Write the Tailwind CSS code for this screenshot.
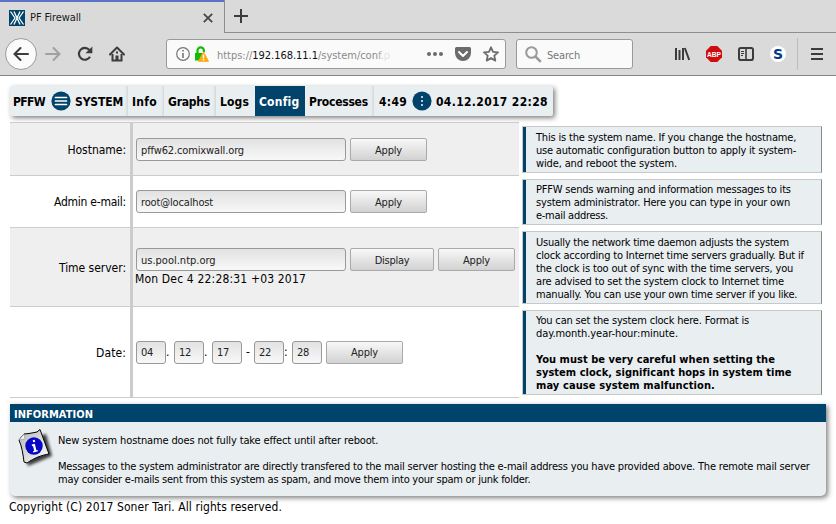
<!DOCTYPE html>
<html lang="en">
<head>
<meta charset="utf-8">
<title>PF Firewall</title>
<script src="https://cdn.jsdelivr.net/npm/@tailwindcss/browser@4"></script>
</head>
<body class="w-[836px] h-[524px] overflow-hidden bg-white text-black font-['DejaVu_Sans_Condensed','DejaVu_Sans',sans-serif] text-[11px] leading-[13px] whitespace-nowrap">

<!-- Browser chrome -->
<header class="h-[76px] bg-[#dadada] border-b border-[#858585]">
  <div class="flex h-[33px]">
    <div class="flex items-center w-[224px] h-[33px] border-t-2 border-[#5b71c4] pl-[9px] pr-[11px]">
      <svg class="w-4 h-4 shrink-0" viewBox="0 0 16 16"><rect width="16" height="16" fill="#00436b"/><g fill="none" stroke="#fff" stroke-width="1.300"><path d="M1.500 1.500l4.500 6.500-4.500 6.500M14.500 1.500L10 8l4.500 6.500M5 1.500l6 13M11 1.500L5 14.500"/></g></svg>
      <span class="ml-[5px] tracking-[-0.09px] text-[#1a1a1a]">PF Firewall</span>
      <svg class="ml-auto w-[10px] h-[10px]" viewBox="0 0 10 10"><path d="M.8.8l8.400 8.400M9.200.8L.8 9.200" stroke="#444" stroke-width="1.700"/></svg>
    </div>
    <div class="flex items-center flex-1 h-[33px] border-l border-b border-[#8e8e8e] pl-[9px]">
      <svg class="w-[14px] h-[14px]" viewBox="0 0 14 14"><path d="M7 0v14M0 7h14" stroke="#3c3c3c" stroke-width="2"/></svg>
    </div>
  </div>
  <div class="flex items-center h-[42px] pl-[5px]">
    <div class="w-8 h-8 rounded-full border border-[#9a9a9a] bg-[#fbfbfb] flex items-center justify-center">
      <svg class="w-4 h-4" viewBox="0 0 16 16" fill="none" stroke="#3c3c3c" stroke-width="2" stroke-linecap="round"><path d="M15 8H2M7.500 2L1.500 8l6 6"/></svg>
    </div>
    <svg class="ml-2 w-4 h-4" viewBox="0 0 16 16" fill="none" stroke="#a0a0a0" stroke-width="2" stroke-linecap="round"><path d="M1 8H14M8.500 2l6 6-6 6"/></svg>
    <svg class="ml-4 w-4 h-4" viewBox="0 0 16 16"><path d="M13 10.700A5.900 5.900 0 1 1 12.300 4" fill="none" stroke="#3c3c3c" stroke-width="2.200"/><path d="M15.300.5v6.800H8.500z" fill="#3c3c3c"/></svg>
    <svg class="ml-4 w-4 h-4" viewBox="0 0 16 16"><path d="M1 8.500l7-7 7 7" fill="none" stroke="#3c3c3c" stroke-width="2" stroke-linecap="round" stroke-linejoin="round"/><path d="M3.500 8v6.500h9V8" fill="none" stroke="#3c3c3c" stroke-width="2"/><path d="M6.500 9.500h3V15h-3z" fill="#3c3c3c"/><path d="M7 5.500h2v2H7z" fill="#3c3c3c"/></svg>
    <div class="ml-[41px] flex items-center w-[340px] h-[30px] rounded-[3px] border border-[#999] bg-[#fafafa] pl-[9px] pr-[6px]">
      <svg class="w-[14px] h-[14px]" viewBox="0 0 14 14"><circle cx="7" cy="7" r="6.300" fill="none" stroke="#757575" stroke-width="1.200"/><path d="M6.200 3h1.600v1.600H6.200zM6.200 6h1.600v5H6.200z" fill="#757575"/></svg>
      <svg class="ml-[4px] w-[15px] h-4" viewBox="0 0 15 16"><path d="M3.500 8V4.500a3.200 3.200 0 0 1 6.400 0V6" fill="none" stroke="#12bc00" stroke-width="2.200"/><path d="M1 7h9v7.500H1z" fill="#12bc00"/><path d="M9.500 6l5 9.300h-10z" fill="#ffa914" stroke="#ffa914" stroke-linejoin="round"/><path d="M8.800 8.500h1.400v3.700H8.800zM8.800 13h1.400v1.400H8.800z" fill="#fff"/></svg>
      <span class="ml-[8px] pt-[2px] tracking-[-0.03px] text-[#8a8a8a]">https://<span class="text-[#111]">192.168.11.1</span>/system/con<span class="text-[#aaa]">f</span><span class="text-[#ccc]">.</span><span class="text-[#e4e4e4]">p</span></span>
      <svg class="ml-auto w-4 h-4" viewBox="0 0 16 16" fill="#6b6b6b"><circle cx="2" cy="8" r="2"/><circle cx="8" cy="8" r="2"/><circle cx="14" cy="8" r="2"/></svg>
      <svg class="ml-3 w-4 h-4" viewBox="0 0 16 16"><path d="M1.500 1h13A1.500 1.500 0 0 1 16 2.500V7a8 8 0 0 1-16 0V2.500A1.500 1.500 0 0 1 1.500 1z" fill="#6b6b6b"/><path d="M4 6l4 4 4-4" fill="none" stroke="#fff" stroke-width="2" stroke-linecap="round" stroke-linejoin="round"/></svg>
      <svg class="ml-3 w-4 h-4" viewBox="0 0 16 16"><path d="M8 1.300l2 4.500 5 .5-3.700 3.300 1 5L8 12.100l-4.300 2.500 1-5L1 6.300l5-.5z" fill="none" stroke="#6b6b6b" stroke-width="1.800" stroke-linejoin="round"/></svg>
    </div>
    <div class="ml-[10px] flex items-center w-[117px] h-[30px] rounded-[3px] border border-[#999] bg-[#fafafa] pl-[8px]">
      <svg class="w-[17px] h-[17px]" viewBox="0 0 17 17" fill="none" stroke="#999" stroke-width="2"><circle cx="6.500" cy="6.500" r="5.300"/><path d="M10.300 10.300l5.500 5.500" stroke-width="2.600"/></svg>
      <span class="ml-[5px] pt-[2px] tracking-[-0.16px] text-[#777]">Search</span>
    </div>
    <svg class="ml-[41px] w-4 h-4" viewBox="0 0 16 16" stroke="#3c3c3c" stroke-width="2"><path d="M2 2v12M5.500 4v10M9 2v12M10.800 2l4.400 12"/></svg>
    <svg class="ml-4 w-4 h-4" viewBox="0 0 16 16"><path d="M4.700 0h6.600L16 4.700v6.600L11.300 16H4.700L0 11.300V4.700z" fill="#d00d0d"/><text x="8" y="11" text-anchor="middle" font-family="Liberation Sans" font-weight="700" font-size="8" textLength="14" lengthAdjust="spacingAndGlyphs" fill="#fff">ABP</text></svg>
    <svg class="ml-4 w-4 h-4" viewBox="0 0 16 16"><rect x="1" y="2" width="14" height="12" rx="1.800" fill="none" stroke="#3c3c3c" stroke-width="2"/><path d="M8 2v12" stroke="#3c3c3c" stroke-width="1.600"/><path d="M3 5.500h3M3 7.500h3M3 9.500h2" stroke="#3c3c3c"/></svg>
    <span class="ml-4 w-4 h-4 rounded-full bg-white flex items-center justify-center font-['DejaVu_Sans'] font-bold text-[14px] leading-4 text-[#06388c]">S</span>
    <div class="ml-[11px] w-px h-8 bg-[#bcbcbc]"></div>
    <svg class="ml-[13px] w-3 h-3" viewBox="0 0 12 12" stroke="#3c3c3c" stroke-width="2"><path d="M0 1h12M0 6h12M0 11h12"/></svg>
  </div>
</header>

<main class="pl-[10px] pt-[10px]">
  <!-- Top menu -->
  <nav class="flex w-[543px] h-[30px] rounded-[2px] bg-[#e9eef1] font-bold text-[12px] shadow-[2px_2px_5px_rgba(0,0,0,0.5)]">
    <div class="flex items-center w-[118px] pl-[3px] shadow-[inset_-4px_0_3px_-3px_rgba(0,0,0,0.12)]">
      <span class="w-[38px] pt-[2px] tracking-[-0.65px]">PFFW</span>
      <svg class="w-[20px] h-[20px]" viewBox="0 0 20 20"><circle cx="10" cy="10" r="9.600" fill="#00436b"/><path d="M4.500 6.500h11M4.500 10h11M4.500 13.500h11" stroke="#fff" stroke-width="1.700" stroke-linecap="round"/></svg>
      <span class="ml-[4px] pt-[2px] tracking-[-0.14px]">SYSTEM</span>
    </div>
    <div class="flex items-center w-[36px] pt-[2px] pl-[4px] tracking-[0.3px] shadow-[inset_-4px_0_3px_-3px_rgba(0,0,0,0.12)]">Info</div>
    <div class="flex items-center w-[52px] pt-[2px] pl-[4px] tracking-[-0.22px] shadow-[inset_-4px_0_3px_-3px_rgba(0,0,0,0.12)]">Graphs</div>
    <div class="flex items-center w-[39px] pt-[2px] pl-[4px] tracking-[0.13px]">Logs</div>
    <div class="flex items-center w-[50px] pt-[2px] pl-[4px] tracking-[0.2px] bg-[#00436b] text-white">Config</div>
    <div class="flex items-center w-[69px] pt-[2px] pl-[4px] tracking-[-0.23px] shadow-[inset_-4px_0_3px_-3px_rgba(0,0,0,0.12)]">Processes</div>
    <div class="flex items-center flex-1 pl-[5px]">
      <span class="w-[33px] pt-[2px] tracking-[0.3px]">4:49</span>
      <svg class="w-[20px] h-[20px]" viewBox="0 0 20 20"><circle cx="10" cy="10" r="9.600" fill="#00436b"/><path d="M9 5h2v2H9zM9 9h2v2H9zM9 13h2v2H9z" fill="#b9cad5"/></svg>
      <span class="ml-[4px] pt-[2px] tracking-[0.34px]">04.12.2017 22:28</span>
    </div>
  </nav>

  <!-- Settings form with help column -->
  <div class="flex mt-[6px] h-[276px]">
    <form class="w-[509px] border-t border-[#ccc] text-[12px]">
      <div class="flex h-[53px] bg-[#efefef] border-b border-[#ccc]">
        <label class="flex items-center justify-end w-[120px] pt-[2px] pr-[4px] tracking-[-0.03px]">Hostname:</label>
        <div class="flex items-center flex-1 border-l-3 border-[#ccc] pl-[3px] gap-[4px]">
          <div class="flex items-center w-[210px] h-[23px] rounded-[3px] border border-[#999] bg-linear-to-b from-[#e2e2e2] to-[#f8f8f8] pt-[2px] pl-[4px] text-[11px] tracking-[-0.13px] text-[#222]">pffw62.comixwall.org</div>
          <button type="button" class="w-[77px] h-[23px] pt-[2px] rounded-[2px] border border-[#aaa] bg-linear-to-b from-[#f8f8f8] to-[#d2d2d2] text-[11px] tracking-[-0.19px] text-[#222]">Apply</button>
        </div>
      </div>
      <div class="flex h-[52px] bg-white border-b border-[#ccc]">
        <label class="flex items-center justify-end w-[120px] pt-[2px] pr-[4px] tracking-[-0.24px]">Admin e-mail:</label>
        <div class="flex items-center flex-1 border-l-3 border-[#ccc] pl-[3px] gap-[4px]">
          <div class="flex items-center w-[210px] h-[23px] rounded-[3px] border border-[#999] bg-linear-to-b from-[#e2e2e2] to-[#f8f8f8] pt-[2px] pl-[4px] text-[11px] tracking-[-0.15px] text-[#222]">root@localhost</div>
          <button type="button" class="w-[77px] h-[23px] pt-[2px] rounded-[2px] border border-[#aaa] bg-linear-to-b from-[#f8f8f8] to-[#d2d2d2] text-[11px] tracking-[-0.19px] text-[#222]">Apply</button>
        </div>
      </div>
      <div class="flex h-[79px] bg-[#efefef] border-b border-[#ccc]">
        <label class="flex items-center justify-end w-[120px] pt-[2px] pr-[4px] tracking-[-0.03px]">Time server:</label>
        <div class="flex flex-col justify-center flex-1 border-l-3 border-[#ccc] pl-[3px]">
          <div class="flex gap-[4px]">
            <div class="flex items-center w-[210px] h-[23px] rounded-[3px] border border-[#999] bg-linear-to-b from-[#e2e2e2] to-[#f8f8f8] pt-[2px] pl-[4px] text-[11px] text-[#222]">us.pool.ntp.org</div>
            <button type="button" class="w-[84px] h-[23px] pt-[2px] rounded-[2px] border border-[#aaa] bg-linear-to-b from-[#f8f8f8] to-[#d2d2d2] text-[11px] tracking-[-0.25px] text-[#222]">Display</button>
            <button type="button" class="w-[77px] h-[23px] pt-[2px] rounded-[2px] border border-[#aaa] bg-linear-to-b from-[#f8f8f8] to-[#d2d2d2] text-[11px] tracking-[-0.19px] text-[#222]">Apply</button>
          </div>
          <div class="-ml-px h-[16px] leading-[16px] tracking-[0.17px]">Mon Dec 4 22:28:31 +03 2017</div>
        </div>
      </div>
      <div class="flex h-[91px] bg-white border-b border-[#ccc]">
        <label class="flex items-center justify-end w-[120px] pt-[2px] pr-[4px] tracking-[0.1px]">Date:</label>
        <div class="flex items-center flex-1 border-l-3 border-[#ccc] pl-[3px]">
          <div class="flex items-center w-[30px] h-[23px] rounded-[3px] border border-[#999] bg-linear-to-b from-[#e2e2e2] to-[#f8f8f8] pt-px pl-[4px] text-[11px] tracking-[-0.4px] text-[#222]">04</div>
          <span class="w-[8px]">.</span>
          <div class="flex items-center w-[30px] h-[23px] rounded-[3px] border border-[#999] bg-linear-to-b from-[#e2e2e2] to-[#f8f8f8] pt-px pl-[4px] text-[11px] tracking-[-0.4px] text-[#222]">12</div>
          <span class="w-[8px]">.</span>
          <div class="flex items-center w-[30px] h-[23px] rounded-[3px] border border-[#999] bg-linear-to-b from-[#e2e2e2] to-[#f8f8f8] pt-px pl-[4px] text-[11px] tracking-[-0.4px] text-[#222]">17</div>
          <span class="w-[12px] text-center">-</span>
          <div class="flex items-center w-[30px] h-[23px] rounded-[3px] border border-[#999] bg-linear-to-b from-[#e2e2e2] to-[#f8f8f8] pt-px pl-[4px] text-[11px] tracking-[-0.4px] text-[#222]">22</div>
          <span class="w-[8px]">:</span>
          <div class="flex items-center w-[30px] h-[23px] rounded-[3px] border border-[#999] bg-linear-to-b from-[#e2e2e2] to-[#f8f8f8] pt-px pl-[4px] text-[11px] tracking-[-0.4px] text-[#222]">28</div>
          <button type="button" class="ml-[4px] w-[77px] h-[23px] rounded-[2px] border border-[#aaa] bg-linear-to-b from-[#f8f8f8] to-[#d2d2d2] text-[11px] tracking-[-0.19px] text-[#222]">Apply</button>
        </div>
      </div>
    </form>

    <aside class="ml-[3px] mt-[4px] w-[300px]">
      <div class="h-[47px] border-y border-l border-r border-[#c8c8c8] border-r-[#888]">
        <div class="flex flex-col justify-center h-full bg-[#e9eef1] border-l-3 border-[#00436b] pt-px pl-[10px]">
          <p class="tracking-[-0.18px]">This is the system name. If you change the hostname,</p>
          <p class="tracking-[-0.2px]">use automatic configuration button to apply it system-</p>
          <p class="tracking-[-0.14px]">wide, and reboot the system.</p>
        </div>
      </div>
      <div class="mt-[6px] h-[46px] border-y border-l border-r border-[#c8c8c8] border-r-[#888]">
        <div class="flex flex-col justify-center h-full bg-[#e9eef1] border-l-3 border-[#00436b] pt-px pl-[10px]">
          <p class="tracking-[-0.2px]">PFFW sends warning and information messages to its</p>
          <p class="tracking-[-0.18px]">system administrator. Here you can type in your own</p>
          <p class="tracking-[-0.27px]">e-mail address.</p>
        </div>
      </div>
      <div class="mt-[6px] h-[73px] border-y border-l border-r border-[#c8c8c8] border-r-[#888]">
        <div class="flex flex-col justify-center h-full bg-[#e9eef1] border-l-3 border-[#00436b] pt-px pl-[10px]">
          <p class="tracking-[-0.24px]">Usually the network time daemon adjusts the system</p>
          <p class="tracking-[-0.18px]">clock according to Internet time servers gradually. But if</p>
          <p class="tracking-[-0.16px]">the clock is too out of sync with the time servers, you</p>
          <p class="tracking-[-0.17px]">are advised to set the system clock to Internet time</p>
          <p class="tracking-[-0.19px]">manually. You can use your own time server if you like.</p>
        </div>
      </div>
      <div class="mt-[6px] h-[85px] border-y border-l border-r border-[#c8c8c8] border-r-[#888]">
        <div class="flex flex-col justify-center h-full bg-[#e9eef1] border-l-3 border-[#00436b] pl-[10px]">
          <p class="tracking-[-0.17px]">You can set the system clock here. Format is</p>
          <p class="tracking-[-0.07px]">day.month.year-hour:minute.</p>
          <p class="mt-[13px] font-bold tracking-[0.04px]">You must be very careful when setting the</p>
          <p class="font-bold tracking-[0.03px]">system clock, significant hops in system time</p>
          <p class="font-bold tracking-[0.1px]">may cause system malfunction.</p>
        </div>
      </div>
    </aside>
  </div>

  <!-- Information panel -->
  <section class="mt-[6px] w-[816px] h-[92px] rounded-b-[5px] bg-[#e9eef1] shadow-[2px_2px_5px_rgba(0,0,0,0.5)]">
    <h2 class="flex items-center h-[18px] pt-[2px] pl-[4px] bg-[#00436b] text-white font-bold tracking-[0.04px]">INFORMATION</h2>
    <div class="flex">
      <svg class="ml-[7px] mt-[6px] w-[38px] h-[42px]" viewBox="0 0 38 42">
        <defs><filter id="s" x="-30%" y="-30%" width="160%" height="160%"><feGaussianBlur stdDeviation="1.500"/></filter><linearGradient id="g" x1="0" y1="0" x2="1" y2="1"><stop offset="0" stop-color="#b5b5b5"/><stop offset="1" stop-color="#fff"/></linearGradient></defs>
        <path d="M5 13L29 6l6 22-24 10z" fill="#000" opacity=".75" filter="url(#s)"/>
        <path d="M2 12L7 6l5-.5L20 4l3-2.500L32 26c-7 1-15 4-22 9L7 34C6 26 5 19 2 12z" fill="url(#g)" stroke="#000" stroke-width="1"/>
        <path d="M2 12L7 6l1 5z" fill="#f4f4f4" stroke="#888" stroke-width=".5"/>
        <circle cx="17" cy="18" r="8.700" fill="#0808c4"/>
        <path d="M14.800 16.500l3-.8 1.600 6.500 1.200-.2.300 1.200-4.600 1.200-.3-1.200 1.200-.4-1.200-4.700-1 .2zM15.700 12.300l2-.5.5 2-2 .5z" fill="#fff"/>
      </svg>
      <div class="ml-[3px] pt-[12px]">
        <p class="tracking-[-0.14px]">New system hostname does not fully take effect until after reboot.</p>
        <p class="mt-[13px] tracking-[-0.19px]">Messages to the system administrator are directly transfered to the mail server hosting the e-mail address you have provided above. The remote mail server</p>
        <p class="tracking-[-0.24px]">may consider e-mails sent from this system as spam, and move them into your spam or junk folder.</p>
      </div>
    </div>
  </section>
  <footer class="mt-[4px] -ml-px text-[12px] leading-[15px] tracking-[0.08px]">Copyright (C) 2017 Soner Tari. All rights reserved.</footer>
</main>
</body>
</html>
